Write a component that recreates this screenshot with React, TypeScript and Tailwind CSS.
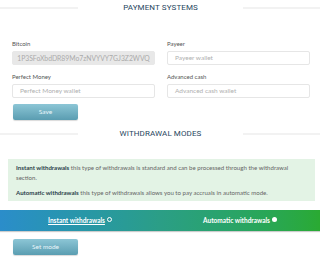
import React from "react";

function Title({ text }: { text: string }) {
  return (
    <div className="flex items-center h-[16px]">
      <div className="w-[78px] h-[2px] bg-[#f2f2f2]" />
      <div className="flex-1 text-center text-[8px] text-[#1f4660] tracking-[0.1px] leading-none" style={{ fontFamily: "Roboto, sans-serif" }}>
        {text}
      </div>
      <div className="w-[77px] h-[2px] bg-[#f2f2f2]" />
    </div>
  );
}

function Field({ label, placeholder, value, disabled }: { label: string; placeholder?: string; value?: string; disabled?: boolean }) {
  return (
    <div className="flex flex-col">
      <div className="text-[6px] leading-none text-[#555] mb-[3px] h-[7px]">{label}</div>
      <div
        className={
          "h-[14px] rounded-[2px] border flex items-center px-[7px] leading-none " +
          (disabled ? "bg-[#e8e8e8] border-[#e8e8e8] text-[#aaa] justify-center text-[6.8px]" : "bg-white border-[#e6e6e6] text-[#b0b0b0] text-[6.5px]")
        }
      >
        {value ?? placeholder}
      </div>
    </div>
  );
}

function Btn({ text }: { text: string }) {
  return (
    <div className="w-[65px] h-[16px] rounded-[2px] bg-gradient-to-b from-[#8cc6d6] to-[#5a9db1] flex items-center justify-center text-[6.5px] text-[#eaf6fa] shadow-[0_1px_1px_rgba(0,0,0,0.15)]">
      {text}
    </div>
  );
}

export default function App() {
  return (
    <div className="w-[320px] h-[258px] bg-white overflow-hidden" style={{ fontFamily: "Lato, 'Open Sans', sans-serif" }}>
      <Title text="PAYMENT SYSTEMS" />
      <div className="grid grid-cols-2 gap-x-[12px] gap-y-[9px] px-[12px] mt-[25px] mr-[-2px]">
        <Field label="Bitcoin" value="1P3SFoXbdDR89Mo7zNVYVY7GJ3Z2WVQ" disabled />
        <Field label="Payeer" placeholder="Payeer wallet" />
        <Field label="Perfect Money" placeholder="Perfect Money wallet" />
        <Field label="Advanced cash" placeholder="Advanced cash wallet" />
      </div>
      <div className="px-[13px] mt-[6px]">
        <Btn text="Save" />
      </div>
      <div className="mt-[6px]">
        <Title text="WITHDRAWAL MODES" />
      </div>
      <div className="ml-[8px] mr-[5px] mt-[17px] h-[42px] bg-[#e3f3e5] pl-[8px] pr-[10px] pt-[4px] text-[6.1px] leading-[9.5px] text-[#666]">
        <p className="whitespace-nowrap">
          <b className="font-bold text-[#2b3f4a]">Instant withdrawals</b> this type of withdrawals is standard and can be processed through the withdrawal
        </p>
        <p>section.</p>
        <p className="mt-[6px] whitespace-nowrap">
          <b className="font-bold text-[#2b3f4a]">Automatic withdrawals</b> this type of withdrawals allows you to pay accruals in automatic mode.
        </p>
      </div>
      <div className="mt-[9px] h-[21px] bg-gradient-to-r from-[#2b8dca] via-[#2b9e86] to-[#2aaa32] flex shadow-[0_1px_1px_rgba(0,0,0,0.2)]">
        <div className="flex-1 flex items-center justify-center gap-[2px] text-[6.5px] font-bold text-white">
          <span className="underline">Instant withdrawals</span>
          <span className="w-[5px] h-[5px] rounded-full border border-white mb-[3px]" />
        </div>
        <div className="flex-1 flex items-center justify-center gap-[2px] text-[6.5px] font-bold text-white">
          <span>Automatic withdrawals</span>
          <span className="w-[5px] h-[5px] rounded-full bg-white mb-[3px]" />
        </div>
      </div>
      <div className="px-[13px] mt-[8px]">
        <Btn text="Set mode" />
      </div>
    </div>
  );
}
